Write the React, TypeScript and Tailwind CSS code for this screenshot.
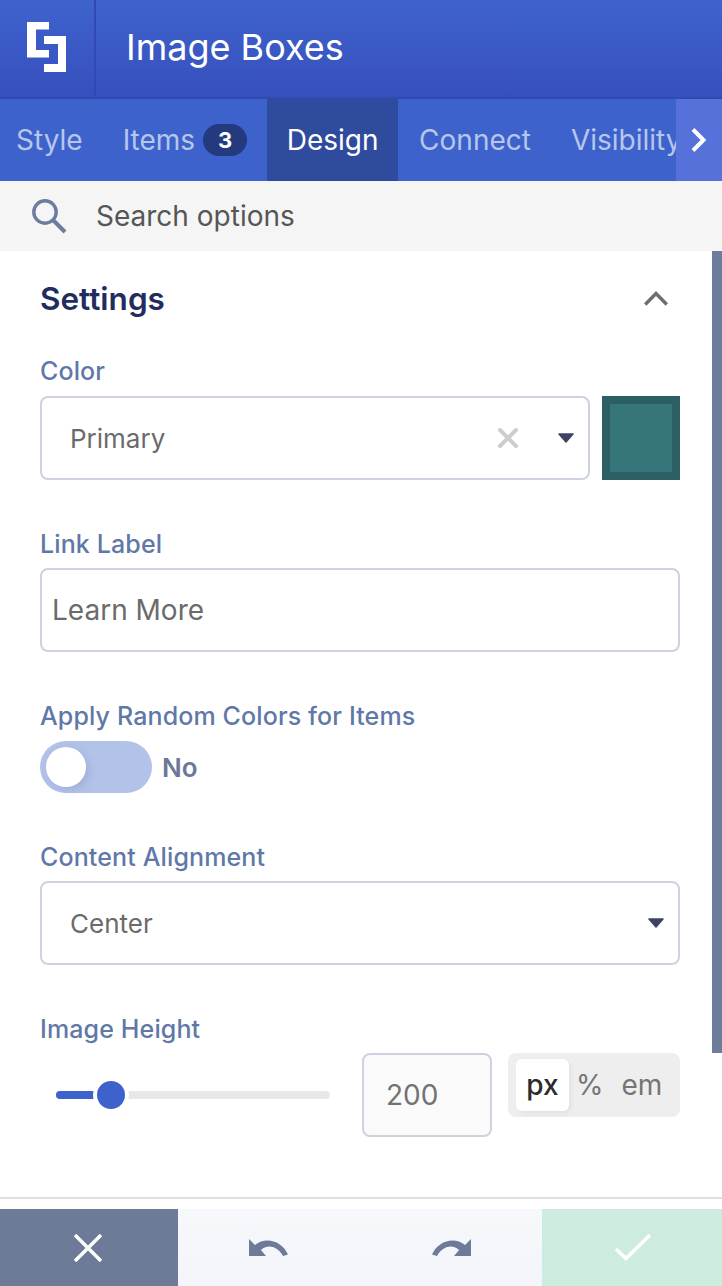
const Label = ({ children }: { children: string }) => (
  <div className="text-[25px] leading-[30px] tracking-[0.13px] font-medium text-[#5f78a8]">{children}</div>
);

const Caret = ({ className }: { className: string }) => (
  <svg width="16" height="10" viewBox="0 0 16 10" className={className}>
    <path d="M1 1h14l-7 8z" fill="#3d4463" stroke="#3d4463" strokeWidth="1.5" strokeLinejoin="round" />
  </svg>
);

const App = () => {
  return (
    <div className="w-[722px] h-[1286px] overflow-hidden bg-white flex flex-col font-['Inter',sans-serif]">
      <header className="h-[99px] flex bg-gradient-to-b from-[#3f63cc] to-[#364fbd] border-b-2 border-[#3249b0]">
        <div className="w-[96px] pb-[3px] pr-px flex items-center justify-center border-r-2 border-[#3249b0]">
          <svg width="39" height="50" viewBox="0 0 39 50" fill="#fff">
            <path d="M0 0H22V7.5H9V28H22V35.5H0Z" />
            <path d="M17 14H39V50H17V42H31V22H17Z" />
          </svg>
        </div>
        <h1 className="pl-[30px] pb-1 flex items-center text-[36px] font-normal text-white">Image Boxes</h1>
      </header>

      <nav className="h-[82px] flex bg-[#3e62cb] text-[28px] relative overflow-hidden">
        <div className="pl-4 pr-5 flex items-center text-[#b6c6ec]">Style</div>
        <div className="px-[20px] flex items-center gap-2 text-[#b6c6ec]">
          Items
          <span className="w-11 h-8 rounded-full bg-[#233a7e] text-white text-[22px] font-bold flex items-center justify-center">3</span>
        </div>
        <div className="w-[131px] flex items-center justify-center bg-[#2e4b9e] text-white">Design</div>
        <div className="px-[21px] flex items-center text-[#b6c6ec]">Connect</div>
        <div className="pl-[19px] flex items-center text-[#b6c6ec] whitespace-nowrap">Visibility</div>
        <div className="absolute right-0 top-0 bottom-0 w-[46px] bg-[#5672da] flex items-center justify-center">
          <svg width="16" height="24" viewBox="0 0 16 24" fill="none" stroke="#fff" strokeWidth="4">
            <path d="M2 1.5L12.5 12L2 22.5" />
          </svg>
        </div>
      </nav>

      <div className="h-[70px] flex items-center bg-[#f5f5f5] pl-[32px] gap-[29px]">
        <svg width="35" height="35" viewBox="0 0 35 35" fill="none" stroke="#6b7c9e">
          <circle cx="13" cy="13" r="11.2" strokeWidth="3.4" />
          <path d="M21.5 21.5L33 33" strokeWidth="4" />
        </svg>
        <span className="text-[28px] text-[#565656]">Search options</span>
      </div>

      <main className="flex-1 relative pl-10 pr-[42px]">
        <div className="absolute right-0 top-0 w-[10px] h-[802px] bg-[#6e7c9b]" />

        <div className="h-[96px] mb-[9px] flex items-center justify-between pr-[12px]">
          <h2 className="text-[31.5px] font-semibold text-[#222d5f]">Settings</h2>
          <svg width="24" height="15" viewBox="0 0 24 15" fill="none" stroke="#6f6f6f" strokeWidth="3.4" className="mb-[2px]">
            <path d="M1.2 13.5L12 2.5L22.8 13.5" />
          </svg>
        </div>

        <Label>Color</Label>
        <div className="mt-[10px] flex gap-3">
          <div className="w-[550px] h-[84px] rounded-lg border-2 border-[#cdd2e1] flex items-center pl-[28px] text-[26px] text-[#6b6b6b]">
            <span className="flex-1">Primary</span>
            <svg width="20" height="20" viewBox="0 0 20 20" fill="none" stroke="#cdcdcd" strokeWidth="4" strokeLinecap="round" className="mr-[40px]">
              <path d="M2 2L18 18M18 2L2 18" />
            </svg>
            <Caret className="mr-[14px]" />
          </div>
          <div className="w-[78px] h-[84px] border-8 border-[#2c5f63] bg-[#36767b]" />
        </div>

        <div className="mt-[49px]"><Label>Link Label</Label></div>
        <div className="mt-[9px] w-full h-[84px] rounded-lg border-2 border-[#cdd2e1] flex items-center pl-[10px] text-[28px] text-[#6b6b6b]">Learn More</div>

        <div className="mt-[49px]"><Label>Apply Random Colors for Items</Label></div>
        <div className="mt-[10px] flex items-center gap-[10px]">
          <div className="w-[112px] h-[52px] rounded-full bg-[#b3c2e8] flex items-center pl-[6px]">
            <div className="w-10 h-10 rounded-full bg-white shadow-[3px_3px_8px_rgba(80,100,160,0.2)]" />
          </div>
          <span className="text-[26px] font-semibold text-[#6b7899]">No</span>
        </div>

        <div className="mt-[49px]"><Label>Content Alignment</Label></div>
        <div className="mt-[9px] w-full h-[84px] rounded-lg border-2 border-[#cdd2e1] flex items-center justify-between pl-[28px] pr-[14px] text-[26px] text-[#6b6b6b]">
          Center
          <Caret className="" />
        </div>

        <div className="mt-[49px]"><Label>Image Height</Label></div>
        <div className="mt-[9px] flex items-start">
          <div className="w-[322px] h-[84px] flex items-center pl-4 relative">
            <div className="w-[274px] h-2 rounded-full bg-[#e8e8e8]" />
            <div className="absolute left-4 top-[38px] w-[40px] h-2 rounded-l-full bg-[#3e62cb]" />
            <div className="absolute left-[53px] top-[24px] w-[28px] h-[28px] rounded-full bg-[#3e62cb] border-4 border-white box-content" />
          </div>
          <div className="w-[130px] h-[84px] rounded-lg border-2 border-[#cdd2e1] bg-[#fafafa] flex items-center pl-[22px] text-[28px] text-[#727272]">200</div>
          <div className="ml-4 w-[172px] h-16 rounded-lg bg-[#eeeeee] flex items-center pl-2 text-[28px] text-[#757575]">
            <div className="w-[53px] h-[52px] rounded-md bg-white text-[#2b2b2b] font-medium flex items-center justify-center shadow-[2px_2px_5px_rgba(0,0,0,0.06)]">px</div>
            <span className="ml-[7px]">%</span>
            <span className="ml-[18px]">em</span>
          </div>
        </div>
      </main>

      <div className="border-t-2 border-[#e0e0e0] h-[12px]" />
      <footer className="h-[77px] flex">
        <div className="w-[178px] pr-[3px] bg-[#6e7b98] flex items-center justify-center">
          <svg width="28" height="28" viewBox="0 0 28 28" fill="none" stroke="#fff" strokeWidth="3.5">
            <path d="M1 1L27 27M27 1L1 27" />
          </svg>
        </div>
        <div className="flex-1 bg-gradient-to-b from-[#f7f8fc] to-[#f3f5fa] flex items-center justify-center gap-[144px]">
          <svg width="39" height="18" viewBox="0 0 39 18" fill="#6e7b98">
            <path d="M0 0V17H17L12 11C17 6 27 5 34 17L39 15.5C33 2 17 -3 6 6Z" />
          </svg>
          <svg width="39" height="18" viewBox="0 0 39 18" fill="#6e7b98">
            <path d="M39 0V17H22L27 11C22 6 12 5 5 17L0 15.5C6 2 22 -3 33 6Z" />
          </svg>
        </div>
        <div className="w-[180px] pl-[2px] bg-[#cdecdf] flex items-center justify-center">
          <svg width="36" height="27" viewBox="0 0 36 27" fill="none" stroke="#fff" strokeWidth="3.5">
            <path d="M1 15L11 24.5L35 1" />
          </svg>
        </div>
      </footer>
    </div>
  );
};

export default App;
